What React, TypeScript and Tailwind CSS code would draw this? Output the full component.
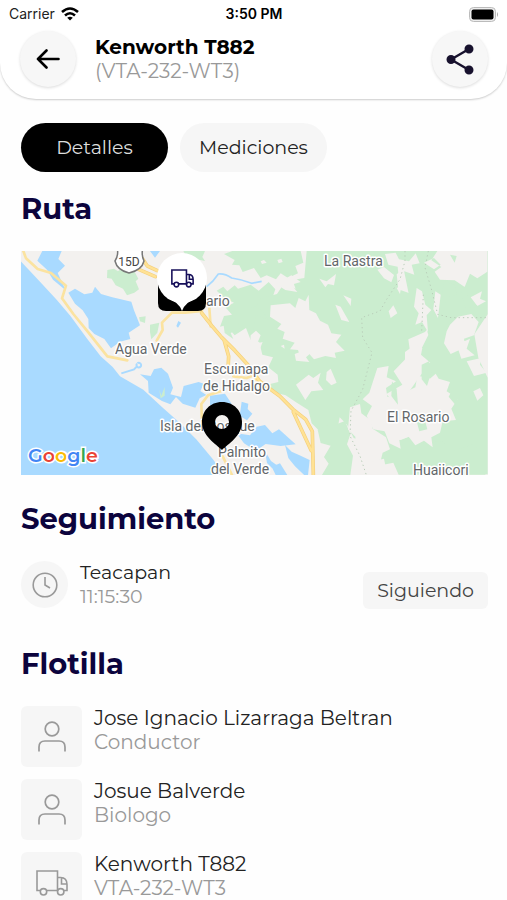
import type { ReactNode } from "react";

function TruckIcon({ className }: { className?: string }) {
  return (
    <svg viewBox="0 0 32 26" className={className} fill="none" stroke="currentColor" strokeWidth="1.6" aria-hidden="true">
      <path d="M4.300 20.500H1V1h20.500v19.500H10.700M21.500 7.500h3q6.500 0 6.500 7v6h-3.300M21.300 20.500h1M25.500 7.500V14H31" />
      <circle cx="7.500" cy="21.800" r="3.200" />
      <circle cx="24.700" cy="21.800" r="3.200" />
    </svg>
  );
}

function PersonIcon() {
  return (
    <svg viewBox="0 0 28 31" className="h-[31px] w-7" fill="none" stroke="currentColor" strokeWidth="1.7" aria-hidden="true">
      <circle cx="14" cy="8" r="6.800" />
      <path d="M1 30.500V26q0-6 6-6h14q6 0 6 6v4.500" />
    </svg>
  );
}

function StatusBar() {
  return (
    <div className="grid h-7 grid-cols-3 items-center pl-[9px] pr-2 font-[Inter,sans-serif] text-[14px] leading-5 text-[#222]">
      <div className="flex items-center gap-[6px]">
        <span>Carrier</span>
        <svg viewBox="0 0 18 14" className="h-[14px] w-[18px]" fill="none" stroke="#000" strokeWidth="2.600" aria-label="Wi-Fi">
          <path d="M1 5q8-7 16 0M4 8.500q5-4.500 10 0" />
          <path d="M9 13.500L6.200 10.800q2.800-2 5.600 0z" fill="#000" stroke="none" />
        </svg>
      </div>
      <span className="text-center font-semibold text-black">3:50 PM</span>
      <svg viewBox="0 0 30 15" className="h-[15px] w-[30px] justify-self-end" aria-label="Battery">
        <rect x="0.500" y="0.500" width="26" height="14" rx="4" fill="#eee" stroke="#bbb" />
        <rect x="2.500" y="2.500" width="22" height="10" rx="2" fill="#000" />
        <path d="M28 5q2 2.500 0 5z" fill="#aaa" />
      </svg>
    </div>
  );
}

function RoundButton({ label, children }: { label: string; children: ReactNode }) {
  return (
    <button aria-label={label} className="flex size-14 shrink-0 items-center justify-center rounded-full bg-[#f7f7f7] shadow-[0_1px_3px_rgba(0,0,0,0.14)]">
      {children}
    </button>
  );
}

function RouteMap() {
  return (
    <svg
      viewBox="0 0 467 224"
      preserveAspectRatio="xMidYMid slice"
      className="h-[224px] w-full font-[Roboto,sans-serif]"
      role="img"
      aria-label="Mapa de la ruta"
    >
      <rect width="467" height="224" fill="#f3f1ef" />
      <g transform="scale(0.33333) translate(-3 -9)">
        {/* vegetation */}
        <g fill="#cbedcf">
          <path d="M262 66l20-4 12 8 15-12 34 12 12 22-8 8 10 24-14 10-22 8-12-20-22-10-12-20-14-2zM357 208l20-3-2 20-15-5zM390 230l28-6-6 30-18 20-4-22zM418 420l8 20 10-25v30l-14 8zM490 9h65l-8 18 8 12-18-4-12 12-10-20-15 0z" />
          <path d="M612 18l25-9h205l8 35-24 10 8 22-30 14-22-14-14 18-28-12-18 8-20-30-34 12-10-20-22-2 8-14z" />
          <path d="M590 128l20-12 12 14 22-18 10 10 38-12 24 18 30-26 20 22-10 30 22 18-30 20 18 40-26 8-6 46-42-10-14-36-34 22-26-30-18 4 12-32 24-4-20-22 26-14-26-12z" />
          <path d="M610 225l36-18 16 34-30 14 8 18-26-18zM690 180l40-10v90l-40-5z" />
          <path d="M860 9h310l-15 50-25 20 5 45 40 14 20 34 30-10 24 50-34 40-50 22 6 44-50 52 26 40-48 28 34 40-60 12-22 32-16 60-34-12-20-40-22-22-8 44-46 4-30-30-10-40-38-24-30-20-40-10-16-22 34-8-2-22-28-22 14-30-32-8-10-42-20-16 10-60 40 14-20-26-20-14 14-24 50-14 20-30 36 14-10-26 36-6z" />
          <path d="M1140 9h263v190l-40 60 12 70 28 60v290h-200l10-70-30-20 6-60 52 8 20-50-30-14 40-56-24-40-50 44-30 10 50-70-22-40 30-60-14-50-36-30z" />
          <path d="M893 545l30-14 10-20 20 16 22-8 16 40-10 30 18 34-8 58h-85l20-34-14-20 20-34-30-8z" />
          <path d="M1040 470l30 26 4 34 30 30 38 16 24-10 40 20 60-6 30 30 60-20 40 30v60h-260l-16-36-30 6-22-30-40-60z" />
        </g>
        {/* clearings */}
        <g fill="#f3f1ef">
          <path d="M752 172l58-6 16 14 10-30 20 10 10-20 2 46 20 10 12 22 24 12 10 26 30 4-16 22 26 26-30 6 4 16-32-6-34 10-16-18-26 8-6-18-24-2 14-20-36-12 6-20-22-10 12-14-34-22z" />
          <path d="M768 108l46-26 28 20-28 8 18 22-36-6zM898 92l22 8 28-22-6 34-18-4-8 10zM946 170l16 6 26 46-24-6zM970 142l24 10-2 22zM772 36l12-4 4 10-12 4zM722 40l10-4 8 8-14 4zM824 318l26-10 26 4-18 16 10 14-40-4zM782 294l10-4 2 12zM692 262l16-14 14 14-10 24 16-4-16 40-24 10z" />
          <path d="M1095 18l32-4 10 20 30 6 20-24 12 30-24 4 8 30-30-10-16 26-4-40-28-6zM1072 65l20-8 30 24-8 22-22-12zM1106 190l14-18 12 24-20 14zM1130 120l14-6-4 24z" />
          <path d="M1252 9h150v62l-30 20-22-14-16 40-30-20-44-2-16-24 20-14-30-20zM1290 230l24-24 40-8 22 24-14 40-30 10 4 26-44 20-20-32 8-36zM1190 120l16 10 10 40 18 16-14 16 4 50-18-30-20 8 10-34-14-20zM1246 130l16 10-8 70-14-26zM1155 312l30-22 22 10-4 20 28 24-20 6 10 30-24-8-8-30-34-2zM1352 148l34-18-6 22 18 8-26 14zM1262 50l-20-20-30 14 30 20zM1310 290l40-18-10 30 24 20-40 10z" />
          <path d="M1072 360l34-6-6 34 28 12-30 20 4 26 34 8-6 18 34 6-2-48 24-12 6-34 34 4 20 26 10-22 34 10-10 28 34 22-20 30 14 34-40 4-8 34-26 14 4 30-26-20-26 14-20-26-28 10 4 26-34-16-14-36-34-6-20-40 16-30-28-20 20-20z" />
          <path d="M828 410l38-30 14 10 22-16-8 30 16 22-36 4-18 26zM920 372l12-10 18 42-16 8-16-16zM990 478l30-10 4 28 30 22 4 24 40 26 12 36-22 10-6 24-44-28-30-10-2-34-22-22zM1012 636l20-14 16 20 44-10 4 20-34 20-50 10zM1340 340l44-10-4 20 20 24-38 10zM1360 430l20-10 10 22-18 16z" />
        </g>
        {/* small woods inside the clearings */}
        <g fill="#cbedcf">
          <path d="M1205 350l22-10 8 30-14 44-16-20zM1270 100l34 10 6 30-22 6-10 24-10-34zM1320 120l14-4 14 40 28 20-40 4zM1116 400l14 24 4 46-20-26zM1290 20l20 4-6 20zM1300 420l20 20-14 30-20-24zM1190 520l24-6 8 30-24 6z" />
        </g>
        <g fill="none" stroke="#b9cdb9" strokeWidth="3" strokeDasharray="4 9">
          <path d="M1155 9v30l-15 55-40 60-20 35-55 20 3 60 28 45-28 110-35 65-3 75 30 60 30 90" />
          <path d="M1225 9l-10 50 18 60 20 80 40 10h110M1210 140l-5 110" />
        </g>

        {/* water */}
        <g fill="#a9daff" transform="translate(0 -9)">
          <path d="M0 46l60 64 50 54 42 50 50 68 40 52 36 32 22 28 70 40 60 56 50 44 50 50 50 60 32 46H0z" />
          <path d="M52 47l15-29h58l-10 24 20 20-22 22 24 52-38-32-18-30zM145 143l20-12 28 17 24-5 8-18 18 22 34 10 57 13 8 26 18 45-34 22 5 19-31 8-27 20-20-28-30-15-17-18-1-27-17-26-23-20zM390 18h30l-15 20zM475 228l8 5-9 15-5-5z" />
          <path d="M360 388l32 5 10-20 22-5 20 18 15 42-8 20 32 8 8-33 45-12 15 5-10 22 18 12-20 10-13 28-38-12-20-20-17 22-25-10-40-25-2-35z" />
          <path d="M570 452l45-6 20 30-30 20-35-15zM665 470l20 6-2 16 14 14-16 20-22-14zM650 565l40 6 20-26 25-5 22 25 20-12 50 45-45 5-45-6-30 20-35-22zM735 618l18 30 22 16-4 20-30-30zM795 600l20 20 22 10 32 15-6 55-38-36-20-25zM755 665l25-10 22 35h-35z" />
        </g>
        <path d="M418 425l6 18 10-26v26l-12 8z" fill="#cbedcf" />
        <path d="M304 376l38-12 10-10m0-8a7 7 0 1 1-1 1" fill="none" stroke="#a9daff" strokeWidth="6" />
        <path d="M560 116q20-15 35-38 20-2 40 12 30 4 60 16l30-6" fill="none" stroke="#a9daff" strokeWidth="5" />

        {/* roads */}
        <g fill="none" strokeLinejoin="round" strokeLinecap="round">
          <g stroke="#fbe3a0" strokeWidth="8">
            <path d="M10 9l8 22 35 32 40 12 45 38-12 38 34 47 45 55 57 72 60 12" />
            <path d="M410 278l18-32-2-22 30-30h40l50-5M568 180l4 55M546 520l-2-52 20-26 38-12M608 625l30 60M640 385l40 5 20-8 10 14" />
          </g>
          <path d="M356 64l50 22M366 30l16 24 30 14M545 195l30 38 30 35 40 40 40 44 34 48 60 44 40 40 38 30 20 36 3 130M612 275l14 50-2 38M820 492l54 116" stroke="#f4cf7c" strokeWidth="11" />
          <path d="M356 64l50 22M366 30l16 24 30 14M545 195l30 38 30 35 40 40 40 44 34 48 60 44 40 40 38 30 20 36 3 130M612 275l14 50-2 38M820 492l54 116" stroke="#ffe294" strokeWidth="7" />
        </g>
      </g>

      {/* place names */}
      <g fill="#626669" stroke="#fff" strokeWidth="3" strokeLinejoin="round" paintOrder="stroke" fontSize="14">
        <text x="303" y="15">La Rastra</text>
        <text x="185" y="55">ario</text>
        <text x="94" y="103">Agua Verde</text>
        <text x="183" y="123">Escuinapa</text>
        <text x="182" y="140">de Hidalgo</text>
        <text x="139" y="180">Isla del Bosque</text>
        <text x="197" y="206">Palmito</text>
        <text x="190" y="223">del Verde</text>
        <text x="366" y="171">El Rosario</text>
        <text x="392" y="224">Huajicori</text>
      </g>
      <path d="M96-4h26q-2 8 1 14-2 9-15 12-12-3-14-12 4-6 2-14z" fill="#fff" stroke="#777" strokeWidth="1.500" />
      <text x="108" y="15" textAnchor="middle" fontSize="12" fill="#444">15D</text>

      {/* vehicle marker */}
      <path d="M137 30h48v22q0 8-8 8h-32q-8 0-8-8z" fill="#000" />
      <path d="M146 47q12 4 15 13 3-9 15-13z" fill="#fff" />
      <circle cx="161" cy="27" r="25" fill="#fff" />
      <svg x="150" y="18" width="23" height="19" viewBox="0 0 32 26" fill="none" stroke="#17105a" strokeWidth="2.200">
        <path d="M4.300 20.500H1.200V1.200h20.300v19.300H10.700M21.500 7.500h3q6.300 0 6.300 7v6h-3.100M21.300 20.500h1M25.500 7.500V14H31" />
        <circle cx="7.500" cy="21.500" r="3.200" />
        <circle cx="24.700" cy="21.500" r="3.200" />
      </svg>

      {/* destination pin */}
      <path d="M201 151c-12 0-20 9-20 20 0 14 14 22 20 28 6-6 20-14 20-28 0-11-8-20-20-20zm0 13a7 7 0 1 1 0 14 7 7 0 0 1 0-14z" fill="#000" fillRule="evenodd" />

      <text x="7" y="211" fontSize="19" fontWeight="600" fontFamily="Montserrat, sans-serif" stroke="#fff" strokeWidth="3" paintOrder="stroke">
        <tspan fill="#4285f4">G</tspan>
        <tspan fill="#ea4335">o</tspan>
        <tspan fill="#fbbc05">o</tspan>
        <tspan fill="#4285f4">g</tspan>
        <tspan fill="#34a853">l</tspan>
        <tspan fill="#ea4335">e</tspan>
      </text>
    </svg>
  );
}

function SectionTitle({ children }: { children: ReactNode }) {
  return <h2 className="text-[29px] font-bold leading-10 text-[#0c043d]">{children}</h2>;
}

const fleet = [
  { name: "Jose Ignacio Lizarraga Beltran", role: "Conductor", kind: "person" },
  { name: "Josue Balverde", role: "Biologo", kind: "person" },
  { name: "Kenworth T882", role: "VTA-232-WT3", kind: "truck" },
];

export default function App() {
  return (
    <div className="flex h-screen flex-col bg-[#fefefe] font-[Montserrat,Inter,sans-serif] text-[19px] leading-6 text-[#222]">
      <header className="shrink-0 rounded-b-[36px] bg-white pb-3 shadow-[0_1px_2px_rgba(0,0,0,0.2)]">
        <StatusBar />
        <div className="flex items-center gap-[19px] pl-5 pr-[19px] pt-[3px]">
          <RoundButton label="Volver">
            <svg viewBox="0 0 24 20" className="h-5 w-6" fill="none" stroke="#000" strokeWidth="2.600" strokeLinecap="round" strokeLinejoin="round">
              <path d="M10.500 1.500L2 10l8.500 8.500M2 10h20.500" />
            </svg>
          </RoundButton>
          <div className="flex-1 text-[20px]">
            <h1 className="font-bold text-black">Kenworth T882</h1>
            <p className="text-[#999]">(VTA-232-WT3)</p>
          </div>
          <RoundButton label="Compartir">
            <svg viewBox="0 0 28 31" className="h-[31px] w-7" fill="#18122e" stroke="#18122e" strokeWidth="2.400">
              <path d="M23 5L5 15.500 23 26" fill="none" />
              <circle cx="23" cy="5" r="3.300" />
              <circle cx="5" cy="15.500" r="3.300" />
              <circle cx="23" cy="26" r="3.300" />
            </svg>
          </RoundButton>
        </div>
      </header>

      <main className="min-h-0 flex-1 overflow-y-auto pl-[21px] pr-[19px] pt-6 [scrollbar-width:none]">
        <nav className="flex gap-3">
          <button className="h-[49px] w-[147px] rounded-full bg-black text-[#ddd]">Detalles</button>
          <button className="h-[49px] w-[147px] rounded-full bg-[#f6f6f6]">Mediciones</button>
        </nav>

        <section className="flex flex-col gap-[22px] pt-[17px]">
          <SectionTitle>Ruta</SectionTitle>
          <RouteMap />
        </section>

        <section className="flex flex-col gap-[22px] pt-6">
          <SectionTitle>Seguimiento</SectionTitle>
          <div className="flex items-start gap-3">
            <div className="flex size-[47px] items-center justify-center rounded-full bg-[#f6f6f6] text-[#999]">
              <svg viewBox="0 0 26 26" className="size-[26px]" fill="none" stroke="currentColor" strokeWidth="1.600" aria-hidden="true">
                <circle cx="13" cy="13" r="11.800" />
                <path d="M13 5v8l5 3" />
              </svg>
            </div>
            <div className="flex-1">
              <p>Teacapan</p>
              <p className="text-[#999]">11:15:30</p>
            </div>
            <button className="mt-[11px] h-[37px] rounded-md bg-[#f6f6f6] px-[14px] text-[#444]">Siguiendo</button>
          </div>
        </section>

        <section className="flex flex-col gap-[22px] pt-[35px]">
          <SectionTitle>Flotilla</SectionTitle>
          <ul className="flex flex-col gap-3 text-[20px]">
            {fleet.map((item) => (
              <li key={item.name} className="flex gap-3">
                <div className="flex size-[61px] shrink-0 items-center justify-center rounded-md bg-[#f6f6f6] text-[#999]">
                  {item.kind === "person" ? <PersonIcon /> : <TruckIcon className="h-[26px] w-8" />}
                </div>
                <div>
                  <p>{item.name}</p>
                  <p className="text-[#999]">{item.role}</p>
                </div>
              </li>
            ))}
          </ul>
        </section>
      </main>
    </div>
  );
}
